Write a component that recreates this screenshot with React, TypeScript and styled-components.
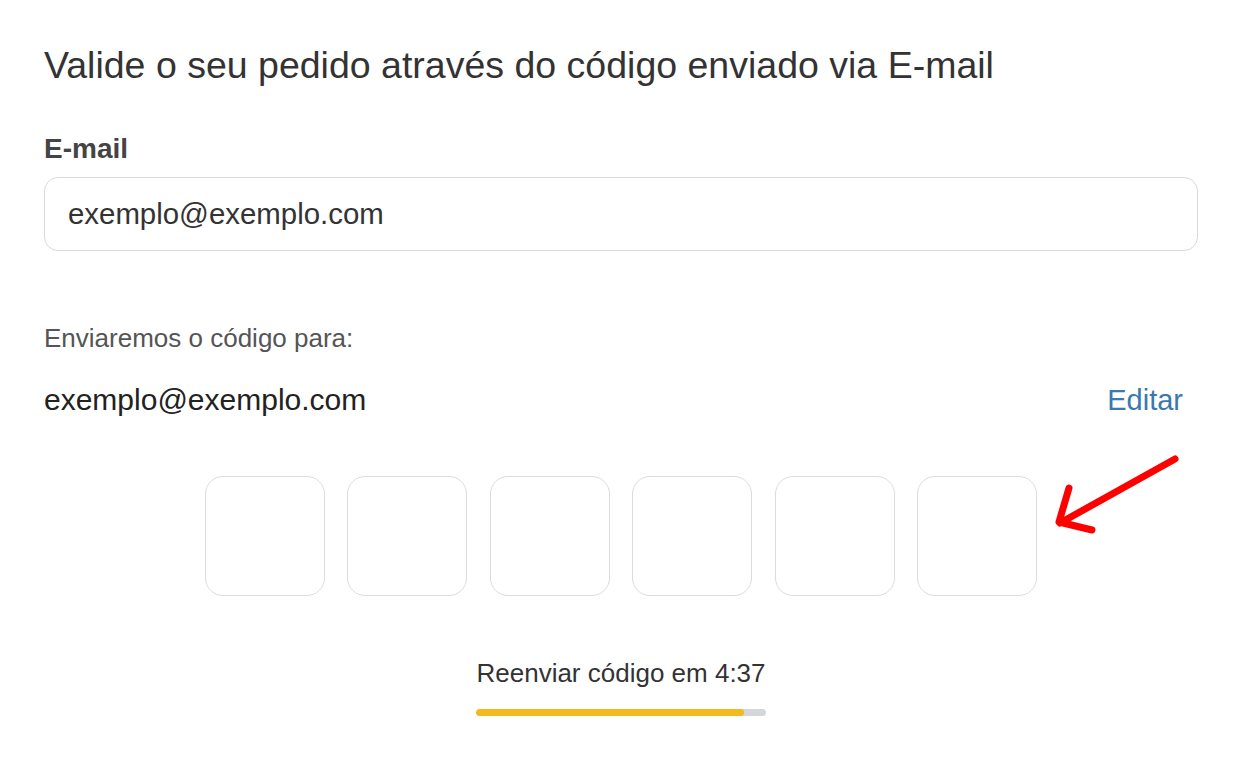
import React from "react";
import styled, { createGlobalStyle } from "styled-components";

const GlobalStyle = createGlobalStyle`
  html, body {
    margin: 0;
    padding: 0;
    background: #ffffff;
  }
  body {
    font-family: "Liberation Sans", Arial, sans-serif;
  }
`;

const CODE_LENGTH = 6;
const progress = 0.924;

const App: React.FC = () => {
  return (
    <>
      <GlobalStyle />
      <Page>
        <Title>Valide o seu pedido através do código enviado via E-mail</Title>

        <Label htmlFor="email">E-mail</Label>
        <EmailInput id="email" defaultValue="exemplo@exemplo.com" />

        <Hint>Enviaremos o código para:</Hint>
        <EmailRow>
          <EmailValue>exemplo@exemplo.com</EmailValue>
          <EditLink>Editar</EditLink>
        </EmailRow>

        <CodeRow>
          {Array.from({ length: CODE_LENGTH }).map((_, i) => (
            <CodeBox key={i} maxLength={1} />
          ))}
        </CodeRow>

        <Resend>
          <ResendText>Reenviar código em 4:37</ResendText>
          <Track>
            <Fill style={{ width: `${progress * 100}%` }} />
          </Track>
        </Resend>

        <Arrow viewBox="0 0 140 90" width="140" height="90">
          <path
            d="M127 8 L12 72 M21 37 L11 71 L44 79"
            fill="none"
            stroke="#ff0000"
            strokeWidth="7"
            strokeLinecap="round"
            strokeLinejoin="round"
          />
        </Arrow>
      </Page>
    </>
  );
};

const Page = styled.div`
  position: relative;
  display: flex;
  flex-direction: column;
  padding: 44px 43px 40px 44px;
  min-height: 767px;
  box-sizing: border-box;
`;

const Title = styled.h1`
  margin: 0 0 46px;
  font-size: 37.5px;
  font-weight: 400;
  line-height: normal;
  color: #333333;
`;

const Label = styled.label`
  font-size: 28px;
  font-weight: 700;
  line-height: normal;
  color: #444444;
  margin-bottom: 12px;
`;

const EmailInput = styled.input`
  height: 74px;
  box-sizing: border-box;
  border: 1px solid #d9d9d9;
  border-radius: 14px;
  padding: 0 23px;
  font-family: "Liberation Sans", Arial, sans-serif;
  font-size: 29.4px;
  color: #333333;
  outline: none;
`;

const Hint = styled.p`
  margin: 72px 0 29px;
  font-size: 26px;
  line-height: normal;
  color: #555555;
`;

const EmailRow = styled.div`
  display: flex;
  justify-content: space-between;
  align-items: center;
  padding-right: 15px;
`;

const EmailValue = styled.span`
  font-size: 30px;
  color: #222222;
`;

const EditLink = styled.a`
  font-size: 29px;
  color: #3b78ad;
  cursor: pointer;
`;

const CodeRow = styled.div`
  display: flex;
  justify-content: center;
  gap: 22.5px;
  margin-top: 59px;
`;

const CodeBox = styled.input`
  width: 120px;
  height: 120px;
  box-sizing: border-box;
  border: 1px solid #dcdcdc;
  border-radius: 18px;
  text-align: center;
  font-size: 40px;
  outline: none;
`;

const Resend = styled.div`
  align-self: center;
  display: inline-flex;
  flex-direction: column;
  margin-top: 62px;
  gap: 20px;
`;

const ResendText = styled.span`
  font-size: 26px;
  line-height: normal;
  color: #333333;
`;

const Track = styled.div`
  height: 7px;
  border-radius: 4px;
  background: #d3d6db;
  overflow: hidden;
`;

const Fill = styled.div`
  height: 100%;
  border-radius: 4px;
  background: #f3b91d;
`;

const Arrow = styled.svg`
  position: absolute;
  left: 1048px;
  top: 451px;
  pointer-events: none;
`;

export default App;
